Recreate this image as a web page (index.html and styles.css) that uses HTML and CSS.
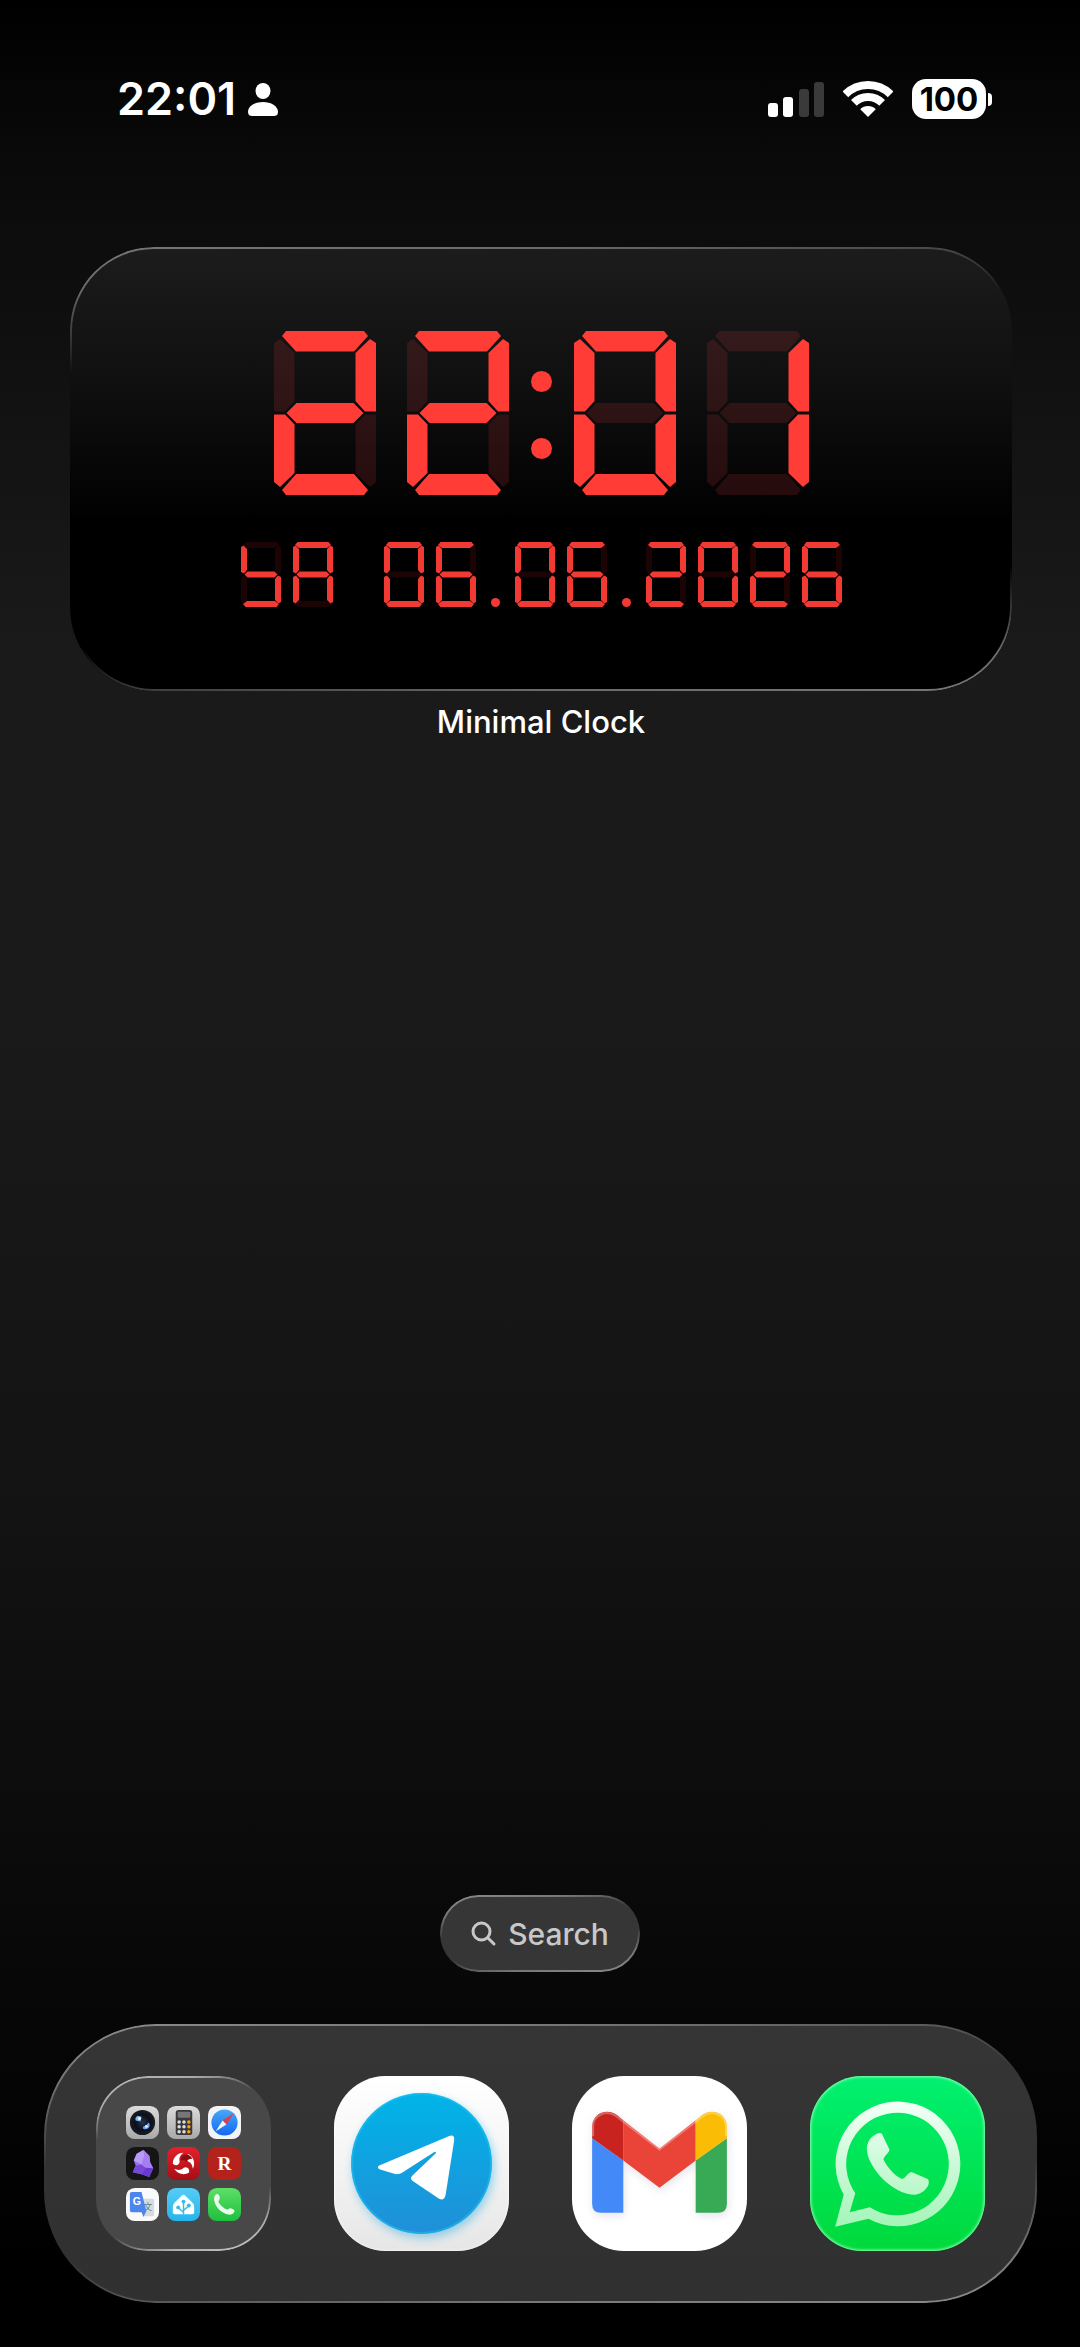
FILE: index.html
```html
<!DOCTYPE html>
<html lang="en">
<head>
    <meta charset="utf-8">
    <meta name="viewport" content="width=device-width, initial-scale=1">
    <title>Home Screen</title>
    <link rel="stylesheet" href="styles.css">
</head>
<body>
    <!-- seven segment digits, segments are lit from css -->
    <svg class="defs" aria-hidden="true">
        <symbol id="big" viewBox="0 0 102 164">
            <polygon class="sa" points="8,5 12,0 90,0 94,5 80,20.5 22,20.5"/>
            <polygon class="sb" points="102,12 96,8 81.5,22 81.5,70 91,80.5 102,80.5"/>
            <polygon class="sc" points="102,83.5 91,83.5 81.5,93.5 81.5,142 96,156 102,151"/>
            <polygon class="sd" points="8,159 22,143 80,143 94,159 90,164 12,164"/>
            <polygon class="se" points="0,83.5 11,83.5 20.5,93.5 20.5,142 6,156 0,151"/>
            <polygon class="sf" points="0,12 6,8 20.5,22 20.5,70 11,80.5 0,80.5"/>
            <polygon class="sg" points="12.5,82 22.5,72 79.5,72 89.5,82 79.5,92 22.5,92"/>
        </symbol>
        <symbol id="small" viewBox="0 0 40 65">
            <polygon class="sa" points="2,3 4.5,0 35.5,0 38,3 34,6 6,6"/>
            <polygon class="sb" points="40,5 37.5,3.5 34,7 34,28 37,31.5 40,30"/>
            <polygon class="sc" points="40,35 37,33.5 34,37 34,58 37.5,61.5 40,60"/>
            <polygon class="sd" points="2,62 6,59 34,59 38,62 35.5,65 4.5,65"/>
            <polygon class="se" points="0,35 3,33.5 6,37 6,58 2.5,61.5 0,60"/>
            <polygon class="sf" points="0,5 2.5,3.5 6,7 6,28 3,31.5 0,30"/>
            <polygon class="sg" points="3.5,32.5 6.5,29.5 33.5,29.5 36.5,32.5 33.5,35.5 6.5,35.5"/>
        </symbol>
    </svg>

    <header class="status">
        <div class="status-left">
            <span class="time">22:01</span>
            <svg class="person" viewBox="0 0 30 33"><ellipse cx="15" cy="8" rx="7.5" ry="8"/><path d="M0 29C0 23 7 19 15 19S30 23 30 29C30 32 28 33 26 33H4C2 33 0 32 0 29Z"/></svg>
        </div>
        <div class="status-right">
            <svg class="signal" viewBox="0 0 56 36">
                <rect x="0" y="22" width="10" height="14" rx="3"/>
                <rect x="15" y="16" width="10" height="20" rx="3"/>
                <rect class="dim" x="31" y="8" width="10" height="28" rx="3"/>
                <rect class="dim" x="46" y="1" width="10" height="35" rx="3"/>
            </svg>
            <svg class="wifi" viewBox="0 0 50 36">
                <clipPath id="wedge"><path d="M25 36L-2 9V-4H52V9Z"/></clipPath>
                <g clip-path="url(#wedge)">
                    <circle class="wave" cx="25" cy="36" r="32"/>
                    <circle class="wave" cx="25" cy="36" r="20"/>
                    <circle cx="25" cy="36" r="11"/>
                </g>
            </svg>
            <div class="battery"><span class="level">100</span><span class="nub"></span></div>
        </div>
    </header>

    <main>
        <section class="widget">
            <div class="clock" role="img" aria-label="22:01">
                <div class="pair">
                    <svg class="digit n2"><use href="#big"/></svg>
                    <svg class="digit n2"><use href="#big"/></svg>
                </div>
                <div class="colon"><i></i><i></i></div>
                <div class="pair">
                    <svg class="digit n0"><use href="#big"/></svg>
                    <svg class="digit n1"><use href="#big"/></svg>
                </div>
            </div>
            <div class="date" role="img" aria-label="SA 06.06.2026">
                <svg class="digit ns"><use href="#small"/></svg>
                <svg class="digit na"><use href="#small"/></svg>
                <span class="space"></span>
                <svg class="digit n0"><use href="#small"/></svg>
                <svg class="digit n6"><use href="#small"/></svg>
                <span class="dot"></span>
                <svg class="digit n0"><use href="#small"/></svg>
                <svg class="digit n6"><use href="#small"/></svg>
                <span class="dot"></span>
                <svg class="digit n2"><use href="#small"/></svg>
                <svg class="digit n0"><use href="#small"/></svg>
                <svg class="digit n2"><use href="#small"/></svg>
                <svg class="digit n6"><use href="#small"/></svg>
            </div>
        </section>
        <p class="caption">Minimal Clock</p>
    </main>

    <button class="search" type="button">
        <svg viewBox="0 0 26 26"><circle cx="10.5" cy="10.5" r="8.5"/><path d="M17 17L23 23"/></svg>
        Search
    </button>

    <nav class="dock">
        <button class="app folder" type="button" aria-label="Folder">
            <!-- camera -->
            <svg viewBox="0 0 34 34">
                <defs>
                    <linearGradient id="silver" x2="0" y2="1"><stop stop-color="#dcdcdc"/><stop offset="1" stop-color="#a9a9a9"/></linearGradient>
                    <radialGradient id="lens"><stop stop-color="#24344f"/><stop offset=".6" stop-color="#0c0e1c"/><stop offset="1" stop-color="#1d1e22"/></radialGradient>
                </defs>
                <rect width="34" height="34" rx="9" fill="url(#silver)"/>
                <circle cx="17" cy="17" r="13" fill="url(#lens)"/>
                <path d="M12 10L16 11L15 16L10 15C9 13 10 11 12 10Z" fill="#7eb8f2"/>
                <path d="M18 21C20 21 22 19 23 17C26 19 24 24 20 24C17 24 17 22 18 21Z" fill="#6aa8ee"/>
                <circle cx="14" cy="13" r="1.5" fill="#fff"/><circle cx="21" cy="21" r="1.5" fill="#e3f2ff"/>
            </svg>
            <!-- calculator -->
            <svg viewBox="0 0 34 34">
                <rect width="34" height="34" rx="9" fill="url(#silver)"/>
                <rect x="9" y="4" width="17" height="26" rx="3" fill="#39393b"/>
                <rect x="11" y="6" width="13" height="6" rx="1" fill="#77777a"/>
                <g fill="#dedede"><circle cx="12.5" cy="16.5" r="1.8"/><circle cx="17.5" cy="16.5" r="1.8"/><circle cx="12.5" cy="21.5" r="1.8"/><circle cx="17.5" cy="21.5" r="1.8"/><circle cx="12.5" cy="26.5" r="1.8"/><circle cx="17.5" cy="26.5" r="1.8"/></g>
                <g fill="#ff9f0a"><circle cx="22.5" cy="16.5" r="1.8"/><circle cx="22.5" cy="21.5" r="1.8"/><circle cx="22.5" cy="26.5" r="1.8"/></g>
            </svg>
            <!-- safari -->
            <svg viewBox="0 0 34 34">
                <defs><linearGradient id="sea" x2="0" y2="1"><stop stop-color="#45a9f7"/><stop offset="1" stop-color="#1667f2"/></linearGradient></defs>
                <rect width="34" height="34" rx="9" fill="#f3f4f7"/>
                <circle cx="17" cy="17" r="13.5" fill="url(#sea)"/>
                <path d="M26.5 7.5L19 19L15 15Z" fill="#e63b45"/>
                <path d="M8 26L15 15L19 19Z" fill="#f4f6fa"/>
            </svg>
            <!-- obsidian -->
            <svg viewBox="0 0 34 34">
                <rect width="34" height="34" rx="9" fill="#151515"/>
                <path d="M18 3L24 9L25 16L28 22L24 31L16 28L7 26L10 19L8 14L11 7Z" fill="#9a70ee"/>
                <path d="M18 3L19 9L16 18L8 14L11 7Z" fill="#b79bf6"/>
                <path d="M16 18L20 21L16 28L7 26L10 19Z" fill="#7548d8"/>
                <path d="M20 21L28 22L24 31L16 28Z" fill="#6a39cf"/>
                <path d="M18 3L24 9L25 16L28 22L20 21L16 18L19 9Z" fill="#a57ff2"/>
            </svg>
            <!-- swirl -->
            <svg viewBox="0 0 34 34">
                <defs><linearGradient id="ruby" x2="0" y2="1"><stop stop-color="#e5202a"/><stop offset="1" stop-color="#a50f16"/></linearGradient></defs>
                <rect width="34" height="34" rx="9" fill="url(#ruby)"/>
                <g fill="#fff">
                    <path d="M17 6C11 6 6 11 6 17C8 20 13 19 13 15C12 11 14 8 17 6Z"/>
                    <path d="M17 6C11 6 6 11 6 17C8 20 13 19 13 15C12 11 14 8 17 6Z" transform="rotate(120 17 17)"/>
                    <path d="M17 6C11 6 6 11 6 17C8 20 13 19 13 15C12 11 14 8 17 6Z" transform="rotate(240 17 17)"/>
                </g>
                <path d="M16 9C20 6 25 9 26 12C23 12 21 13 20 16C19 13 17 13 14 14C14 12 15 10 16 9Z" fill="#8c0e14"/>
            </svg>
            <svg viewBox="0 0 34 34">
                <rect width="34" height="34" rx="9" fill="#b3231c"/>
                <text class="serif" x="17" y="24" text-anchor="middle">R</text>
            </svg>
            <!-- translate -->
            <svg viewBox="0 0 34 34">
                <rect width="34" height="34" rx="9" fill="#fafafa"/>
                <path d="M16 11H27Q29 11 29 13V27Q29 29 27 29H19Z" fill="#d8dadd"/>
                <text class="han" x="18" y="23">文</text>
                <path d="M6 4H16L21 24L18 30L16 25H6Q4 25 4 23V6Q4 4 6 4Z" fill="#4a86ee"/>
                <text class="latin" x="7" y="18">G</text>
            </svg>
            <!-- home -->
            <svg viewBox="0 0 34 34">
                <defs><linearGradient id="sky" x2="0" y2="1"><stop stop-color="#57cdf3"/><stop offset="1" stop-color="#23b5ee"/></linearGradient></defs>
                <rect width="34" height="34" rx="9" fill="url(#sky)"/>
                <path d="M15 8Q17 6 19 8L26 15Q28 17 28 20V25Q28 27 26 27H8Q6 27 6 25V20Q6 17 8 15Z" fill="#fff"/>
                <path d="M17 27V14M17 25L11 20M17 23L23 18" fill="none" stroke="#34bcef" stroke-width="1.5"/>
                <g fill="#34bcef"><circle cx="17" cy="14" r="2"/><circle cx="11.5" cy="20" r="2"/><circle cx="22.5" cy="18" r="2"/></g>
            </svg>
            <!-- phone -->
            <svg viewBox="0 0 34 34">
                <defs><linearGradient id="leaf" x2="0" y2="1"><stop stop-color="#5ddf66"/><stop offset="1" stop-color="#1fbf3d"/></linearGradient></defs>
                <rect width="34" height="34" rx="9" fill="url(#leaf)"/>
                <path d="M7 8C9 5 11 6 12 9C13 12 10 13 11 15C13 18 16 21 19 22C21 23 21 20 24 21C28 22 28 24 26 26C24 28 21 28 17 26C12 24 8 19 7 15C6 12 6 10 7 8Z" fill="#e9fbea"/>
            </svg>
        </button>

        <button class="app telegram" type="button" aria-label="Telegram">
            <svg viewBox="0 0 174 174">
                <defs><linearGradient id="blue" x2="0" y2="1"><stop stop-color="#00b4e8"/><stop offset="1" stop-color="#218fd8"/></linearGradient></defs>
                <circle class="disc" cx="87" cy="87" r="70" fill="url(#blue)"/>
                <circle cx="87" cy="87" r="69" fill="none" stroke="#1fc3f2" stroke-opacity=".5" stroke-width="2"/>
                <path d="M45 89L114 60C118 58 120 60 119.500 64L111 118C110 123 107 124 103 121L79 105C76 103 76 101 78 99L101 77C102 75 101 75 99 76L68 96C65 98 62 98 59 97L46 93C43 92 43 90 45 89Z" fill="#fff"/>
            </svg>
        </button>

        <button class="app gmail" type="button" aria-label="Gmail">
            <svg viewBox="0 0 174 174">
                <path class="blue" d="M20 62L51 84V136H29Q20 136 20 127Z"/>
                <path class="green" d="M154 62L123 84V136H145Q154 136 154 127Z"/>
                <path class="red" d="M51 44L87 72L123 44V84L87 111L51 84Z"/>
                <path class="darkred" d="M20 62V50C20 38 34 31 45 39L51 44V84Z"/>
                <path class="yellow" d="M154 62V50C154 38 140 31 129 39L123 44V84Z"/>
                <path class="shine" d="M21 60V50C21 39 34 33 44 40L87 73L130 40C140 33 153 39 153 50V60"/>
            </svg>
        </button>

        <button class="app whatsapp" type="button" aria-label="WhatsApp">
            <svg viewBox="0 0 174 174">
                <defs><linearGradient id="mint" gradientUnits="userSpaceOnUse" x1="87" y1="25" x2="87" y2="150"><stop stop-color="#f4fff7"/><stop offset="1" stop-color="#a4f5b8"/></linearGradient></defs>
                <path fill="url(#mint)" fill-rule="evenodd" d="M25 150L33.500 118A62 62 0 1 1 58 142ZM39.500 135.500L59.500 130.500A51 51 0 1 0 45 116.500Z"/>
                <path fill="url(#mint)" d="M64 59C67 57 70 56 71.500 57.500L79 73C79 76 73 80 73 83C77 91 84 99 91.500 102.500C95 102 97 96 101 95.500L117 102.500C121 107 114 117 105 118C80 118 56 88 56.500 72C57 66 60 61 64 59Z"/>
            </svg>
        </button>
    </nav>
</body>
</html>
```
FILE: styles.css
```css
*{
    box-sizing:border-box;
}
body{
    margin:0;
    min-height:100vh;
    display:flex;
    flex-direction:column;
    background:linear-gradient(#000 0%, #0a0a0a 7%, #1a1a1a 28%, #1a1a1a 42%, #141414 62%, #0a0a0a 80%, #000 97%);
    color:#fff;
    font-family:Inter, "Liberation Sans", sans-serif;
}
button{
    margin:0;
    border:0;
    padding:0;
    color:inherit;
    font:inherit;
    cursor:pointer;
}
svg{
    display:block;
}
.defs{
    position:absolute;
    width:0;
    height:0;
}

/* status bar */
.status{
    display:flex;
    justify-content:space-between;
    align-items:center;
    padding:74px 88px 0 117px;
    height:124px;
    fill:#fff;
}
.status-left,.status-right{
    display:flex;
    align-items:center;
}
.status-left{
    gap:12px;
}
.status-right{
    gap:19px;
}
.time{
    font-size:45px;
    line-height:52px;
    font-weight:600;
}
.person{
    width:30px;
    height:33px;
}
.signal{
    width:56px;
    height:36px;
}
.dim{
    fill:#3a3a3a;
}
.wifi{
    width:50px;
    height:36px;
}
.wave{
    fill:none;
    stroke:#fff;
    stroke-width:8px;
}
.battery{
    display:flex;
    align-items:center;
    gap:2px;
}
.level{
    width:74px;
    border-radius:14px;
    background:#fff;
    color:#000;
    font-size:33px;
    line-height:40px;
    font-weight:700;
    text-align:center;
}
.nub{
    width:4px;
    height:13px;
    border-radius:0 6px 6px 0;
    background:#fff;
}

/* clock widget */
main{
    flex:1;
    padding:123px 68px 0 70px;
}
.widget{
    position:relative;
    display:flex;
    flex-direction:column;
    align-items:center;
    gap:47px;
    padding:84px 40px;
    border-radius:84px;
    background:linear-gradient(#1c1c1c, #0f0f0f 32%, #000 62%);
}
/* thin light on the glass edge */
.widget::before,.search::before,.dock::before,.folder::before{
    content:"";
    position:absolute;
    inset:0;
    border-radius:inherit;
    padding:2px;
    background:linear-gradient(175deg, #777 0%, #6a6a6a 8%, transparent 24%, transparent 76%, #6a6a6a 92%, #777 100%);
    mask:linear-gradient(#000 0 0) content-box exclude, linear-gradient(#000 0 0);
    pointer-events:none;
}
.clock{
    display:flex;
    gap:22px;
}
.pair{
    display:flex;
    gap:31px;
}
.clock .digit{
    width:102px;
    height:164px;
}
.colon{
    display:flex;
    flex-direction:column;
    justify-content:center;
    gap:46px;
    padding-top:4px;
}
.colon i{
    width:21px;
    height:21px;
    border-radius:50%;
    background:#ff3d36;
}
.digit{
    --on:#ff3d36;
    --off:rgba(255,61,70,.14);
}
.date{
    display:flex;
    gap:12px;
}
.date .digit{
    --on:#f23a35;
    --off:rgba(255,40,50,.11);
    width:40px;
    height:65px;
}
.space{
    width:27px;
}
.dot{
    align-self:flex-end;
    width:9px;
    height:9px;
    margin:0 3px;
    border-radius:50%;
    background:#f23a35;
}
.sa{ fill:var(--a, var(--on)); }
.sb{ fill:var(--b, var(--on)); }
.sc{ fill:var(--c, var(--on)); }
.sd{ fill:var(--d, var(--on)); }
.se{ fill:var(--e, var(--on)); }
.sf{ fill:var(--f, var(--on)); }
.sg{ fill:var(--g, var(--on)); }
/* segments that stay dark */
.n0{
    --g:var(--off);
}
.n1{
    --a:var(--off);
    --d:var(--off);
    --e:var(--off);
    --f:var(--off);
    --g:var(--off);
}
.n2{
    --c:var(--off);
    --f:var(--off);
}
.n6{
    --b:var(--off);
}
.ns{
    --a:var(--off);
    --b:var(--off);
    --e:var(--off);
}
.na{
    --d:var(--off);
}
.caption{
    margin:11px 0 0;
    font-size:31px;
    line-height:40px;
    font-weight:500;
    text-align:center;
}

/* search */
.search{
    position:relative;
    align-self:center;
    display:flex;
    align-items:center;
    gap:11px;
    height:77px;
    margin-bottom:52px;
    padding:0 31px;
    border-radius:39px;
    background:#363636;
    color:#c8c8c8;
    font-size:30px;
    font-weight:500;
}
.search svg{
    width:26px;
    height:26px;
    fill:none;
    stroke:#c8c8c8;
    stroke-width:3px;
    stroke-linecap:round;
}
.search::before{
    background:linear-gradient(170deg, #8c8c8c 0%, #777 20%, transparent 40%, transparent 60%, #777 80%, #8c8c8c 100%);
}

/* dock */
.dock{
    position:relative;
    display:flex;
    justify-content:space-between;
    margin:0 43px 44px 44px;
    padding:52px;
    border-radius:112px;
    background:linear-gradient(#353535, #303030);
}
.dock::before{
    background:linear-gradient(174deg, #8c8c8c 0%, #777 14%, transparent 38%, transparent 62%, #777 86%, #8c8c8c 100%);
}
.app{
    position:relative;
    width:175px;
    height:175px;
    border-radius:52px;
    overflow:hidden;
}
.folder{
    display:grid;
    grid-template-columns:repeat(3, 33px);
    grid-auto-rows:33px;
    gap:8px;
    place-content:center;
    background:#484848;
}
.folder::before{
    background:linear-gradient(162deg, #bbb 0%, #aaa 14%, transparent 28%, transparent 72%, #aaa 86%, #ccc 100%);
}
.serif{
    fill:#fff;
    font:bold 20px "Liberation Serif", serif;
}
.latin{
    fill:#fff;
    font:bold 11px "Liberation Sans", sans-serif;
}
.han{
    fill:#56808a;
    font:9px "Noto Sans CJK SC", sans-serif;
}
.telegram{
    background:linear-gradient(#fff, #f4f4f4 50%, #e6e6e6);
    box-shadow:inset 0 0 3px #fff;
}
.disc{
    filter:drop-shadow(2px 4px 5px rgba(0,160,225,.4));
}
.gmail{
    background:#fff;
}
.gmail svg{
    filter:drop-shadow(1px 3px 4px rgba(120,120,160,.2));
}
.blue{
    fill:#4389f8;
}
.green{
    fill:#38aa55;
}
.red{
    fill:#ea4438;
}
.darkred{
    fill:#c8231f;
}
.yellow{
    fill:#fbbc05;
}
.shine{
    fill:none;
    stroke:#fff;
    stroke-opacity:.3;
    stroke-width:2px;
}
.whatsapp{
    background:linear-gradient(#00f070, #00d93c);
    box-shadow:inset 0 0 3px 1px #8dffb5;
}
```
